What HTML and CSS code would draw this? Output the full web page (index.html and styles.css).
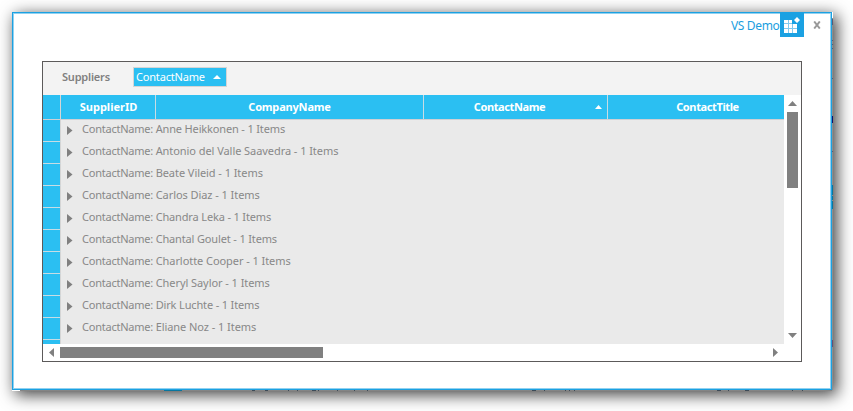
FILE: index.html
```html
<!DOCTYPE html>
<html lang="en">
<head>
<meta charset="utf-8">
<title>VS Demo</title>
<link rel="stylesheet" href="styles.css">
</head>
<body>
<div class="window">
  <svg class="edge-right" width="1" height="378" shape-rendering="crispEdges"><path fill="#8d8d8d" d="M0 0h1v378H0z"/><path fill="#fff" d="M0 0h1v6H0z"/><path fill="#555b78" d="M0 7h1v6H0zM0 28h1v1H0zM0 32h1v1H0zM0 36h1v1H0zM0 66h1v1H0zM0 139h1v1H0z"/><path fill="#10106a" d="M0 104h1v7H0z"/><path fill="#08769f" d="M0 173h1v10H0zM0 184h1v4H0zM0 189h1v8H0z"/><path fill="#635077" d="M0 328h1v7H0z"/></svg>
  <svg class="edge-bottom" width="820" height="1" shape-rendering="crispEdges"><path fill="#858585" d="M0 0h820v1H0z"/><path fill="#fff" d="M0 0h8v1H0z"/><path fill="#08769f" d="M152 0h18v1h-18z"/><path fill="#3d4b58" d="M240 0h3v1h-3zM253 0h3v1h-3zM276 0h1v1h-1zM285 0h1v1h-1zM300 0h4v1h-4zM306 0h1v1h-1zM325 0h1v1h-1zM342 0h1v1h-1zM355 0h1v1h-1zM520 0h4v1h-4zM532 0h1v1h-1zM553 0h1v1h-1zM557 0h1v1h-1zM562 0h1v1h-1zM705 0h4v1h-4zM716 0h1v1h-1zM733 0h4v1h-4zM780 0h1v1h-1zM790 0h1v1h-1z"/></svg>
  <header class="titlebar">
    <span class="title">VS Demo</span>
    <svg class="app-icon" width="24" height="24" viewBox="0 0 24 24"><path fill="#1ba1e2" d="M0 0h24v24H0z"/><path fill="#83caef" d="M4 7h8v4h5v9H4z"/><path fill="#fff" d="M4 7h4v3H4zM9 7h3v3H9zM4 11h4v4H4zM9 11h3v4H9zM13 11h4v4h-4zM4 16h4v4H4zM9 16h3v4H9zM13 16h4v4h-4zM17 4 20 7 17 10 14 7z"/></svg>
    <svg class="close" width="8" height="8" viewBox="0 0 8 8"><path d="M1.200.5 6.800 7.500M6.800.5 1.200 7.500" stroke="#999" stroke-width="2"/></svg>
  </header>
  <main class="grid">
    <div class="group-panel">
      <span class="group-title">Suppliers</span>
      <span class="chip"><span class="chip-label">ContactName</span><svg width="8" height="4"><path fill="#fff" d="M0 4 4 0 8 4z"/></svg></span>
    </div>
    <div class="content">
      <div class="table">
        <div class="head">
          <span class="stub"></span>
          <span class="col id"><b>SupplierID</b></span>
          <span class="col company"><b>CompanyName</b></span>
          <span class="col contact"><b>ContactName</b><svg class="sort" width="7" height="4"><path fill="#fff" d="M0 4 3.500 0 7 4z"/></svg></span>
          <span class="col job"><b>ContactTitle</b></span>
        </div>
        <div class="rows">
          <div class="row"><i></i><svg width="6" height="9"><path d="M0 0 5.500 4.500 0 9z"/></svg><span class="label"><span class="field">ContactName: </span><span class="tight">Anne Heikkonen - 1 Items</span></span></div>
          <div class="row"><i></i><svg width="6" height="9"><path d="M0 0 5.500 4.500 0 9z"/></svg><span class="label"><span class="field">ContactName: </span>Antonio del Valle Saavedra - 1 Items</span></div>
          <div class="row"><i></i><svg width="6" height="9"><path d="M0 0 5.500 4.500 0 9z"/></svg><span class="label"><span class="field">ContactName: </span>Beate Vileid - 1 Items</span></div>
          <div class="row"><i></i><svg width="6" height="9"><path d="M0 0 5.500 4.500 0 9z"/></svg><span class="label"><span class="field">ContactName: </span>Carlos Diaz - 1 Items</span></div>
          <div class="row"><i></i><svg width="6" height="9"><path d="M0 0 5.500 4.500 0 9z"/></svg><span class="label"><span class="field">ContactName: </span><span class="tight">Chandra Leka - 1 Items</span></span></div>
          <div class="row"><i></i><svg width="6" height="9"><path d="M0 0 5.500 4.500 0 9z"/></svg><span class="label"><span class="field">ContactName: </span><span class="tight">Chantal Goulet - 1 Items</span></span></div>
          <div class="row"><i></i><svg width="6" height="9"><path d="M0 0 5.500 4.500 0 9z"/></svg><span class="label"><span class="field">ContactName: </span>Charlotte Cooper - 1 Items</span></div>
          <div class="row"><i></i><svg width="6" height="9"><path d="M0 0 5.500 4.500 0 9z"/></svg><span class="label"><span class="field">ContactName: </span>Cheryl Saylor - 1 Items</span></div>
          <div class="row"><i></i><svg width="6" height="9"><path d="M0 0 5.500 4.500 0 9z"/></svg><span class="label"><span class="field">ContactName: </span><span class="tight">Dirk Luchte - 1 Items</span></span></div>
          <div class="row"><i></i><svg width="6" height="9"><path d="M0 0 5.500 4.500 0 9z"/></svg><span class="label"><span class="field">ContactName: </span>Eliane Noz - 1 Items</span></div>
          <div class="row"><i></i></div>
        </div>
      </div>
      <div class="vscroll">
        <svg width="9" height="5"><path d="M0 5 4.500 0 9 5z"/></svg>
        <span class="vthumb"></span>
        <svg width="9" height="5"><path d="M0 0h9L4.500 5z"/></svg>
      </div>
    </div>
    <div class="hscroll">
      <svg width="5" height="9"><path d="M5 0v9L0 4.500z"/></svg>
      <span class="hthumb"></span>
      <svg width="5" height="9"><path d="M0 0v9l5-4.500z"/></svg>
    </div>
  </main>
</div>
</body>
</html>
```

FILE: styles.css
```css
* { box-sizing: border-box; }
body {
  margin: 0;
  padding: 12px;
  height: 411px;
  overflow: hidden;
  background: #fff;
  font: 11px/14px "Noto Sans", "Open Sans", sans-serif;
  color: #808080;
}
svg { display: block; flex: none; fill: #808080; }
.window {
  position: relative;
  width: 820px;
  height: 378px;
  padding: 1px;
  background: #fff;
  border: 1px solid #1ba1e2;
  box-shadow: inset 0 0 0 1px #91d1f0, 4px 4px 15px 1px rgba(0, 0, 0, .75);
}
.edge-right { position: absolute; left: 819px; top: -1px; }
.edge-bottom { position: absolute; left: -1px; top: 377px; }
.titlebar { display: flex; height: 47px; justify-content: flex-end; margin-top: -1px; }
.title { margin-top: 6px; font-size: 12px; color: #1b9ee0; width: 49px; white-space: nowrap; letter-spacing: -.35px; }
.close { margin: 8px 9px 0 9px; }
.grid {
  width: 760px;
  height: 301px;
  margin: 1px 0 0 28px;
  border: 1px solid #5c5a5a;
  background: #fff;
}
.group-panel { display: flex; height: 33px; background: #f3f3f3; }
.group-title { width: 90px; padding: 8px 0 0 19px; font-weight: 600; letter-spacing: -.2px; }
.chip {
  display: flex;
  align-items: center;
  width: 94px;
  height: 20px;
  margin-top: 5px;
  border: 1px solid #d5d5d5;
  background: #2bbff2;
  color: #fff;
}
.chip-label { width: 79px; padding-left: 2px; letter-spacing: -.18px; }
.content { display: flex; height: 249px; }
.table { width: 741px; overflow: hidden; background: #eaeaea; }
.head { display: flex; height: 25px; background: #2bbff2; border-bottom: 1px solid #d0d0d4; color: #fff; }
.stub { width: 18px; flex: none; border-right: 1px solid #d5d5d5; }
.col { display: flex; align-items: center; justify-content: center; flex: none; border-right: 1px solid #c8dce4; }
.col b { letter-spacing: -.18px; }
.id { width: 95px; padding-left: 1px; }
.id b { letter-spacing: 0; }
.company { width: 268px; }
.contact { position: relative; width: 184px; padding-right: 12px; }
.contact b, .job b { letter-spacing: -.38px; }
.job { width: 200px; }
.sort { position: absolute; right: 5px; top: 10px; }
.row { display: flex; height: 22px; white-space: nowrap; }
.row i { width: 18px; flex: none; background: #2bbff2; border-bottom: 1px solid #c8dce4; border-right: 1px solid #d5d5d5; }
.row svg { margin: 6px 9px 0 6px; }
.label { padding-top: 2px; color: #888; letter-spacing: -.06px; }
.field { letter-spacing: -.23px; }
.tight { letter-spacing: -.15px; }
.vscroll { display: flex; flex-direction: column; align-items: center; width: 17px; padding-top: 6px; }
.vthumb { width: 11px; height: 76px; margin: 6px 0 144.500px; background: #808080; }
.hscroll { display: flex; align-items: center; padding-left: 6px; height: 17px; }
.hthumb { width: 263px; height: 11px; margin: 0 450px 0 6px; background: #808080; }
```
